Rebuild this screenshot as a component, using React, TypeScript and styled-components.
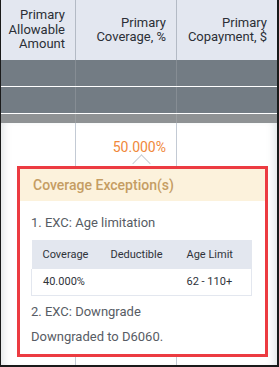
import React from "react";
import styled, { createGlobalStyle } from "styled-components";

const Global = createGlobalStyle`
  html, body { margin: 0; padding: 0; background: #ffffff; }
  * { box-sizing: border-box; }
`;

const Frame = styled.div`
  position: relative;
  width: 279px;
  height: 367px;
  overflow: hidden;
  border-left: 1px solid #1a1a1a;
  border-right: 2px solid #1a1a1a;
  border-bottom: 2px solid #1a1a1a;
  font-family: Roboto, "Liberation Sans", sans-serif;
  background: #ffffff;
`;

const Row = styled.div<{ $h: number; $bg: string; $line: string; $gapBelow?: string }>`
  display: grid;
  grid-template-columns: 75px 101px 1fr;
  height: ${(p) => p.$h}px;
  background: ${(p) => p.$bg};
  border-bottom: ${(p) => (p.$gapBelow ? `1px solid ${p.$gapBelow}` : "none")};
  & > div:not(:last-child) {
    border-right: 1px solid ${(p) => p.$line};
  }
`;

const HeadCell = styled.div`
  display: flex;
  align-items: center;
  justify-content: flex-end;
  text-align: right;
  padding-right: 10px;
  font-size: 13px;
  line-height: 14.5px;
  color: #2b2f36;
`;

const Cell = styled.div<{ $pad?: number }>`
  display: flex;
  justify-content: flex-end;
  align-items: flex-start;
  padding: ${(p) => p.$pad ?? 0}px 10px 0 0;
`;

const Percent = styled.span`
  font-size: 14px;
  line-height: 18px;
  color: #f0883a;
`;

const Body = styled.div`
  height: 243px;
  box-shadow: inset 8px 0 8px -6px rgba(120, 130, 145, 0.25),
    inset -8px 0 8px -6px rgba(120, 130, 145, 0.25);
`;

const Popover = styled.div`
  position: absolute;
  left: 16px;
  top: 166px;
  width: 251px;
  height: 191px;
  background: #ffffff;
  border: 3px solid #ec3b41;
  z-index: 2;
  display: flex;
  flex-direction: column;
`;

const Arrow = styled.div`
  position: absolute;
  left: 134px;
  top: 157px;
  width: 13px;
  height: 13px;
  background: #ffffff;
  border-top: 1px solid #c9ced6;
  border-left: 1px solid #c9ced6;
  transform: rotate(45deg);
  z-index: 1;
`;

const PopHeader = styled.div`
  height: 32px;
  display: flex;
  align-items: center;
  padding-left: 13px;
  background: #fcf2dc;
  color: #c59d63;
  font-size: 14px;
  font-weight: 500;
`;

const PopBody = styled.div`
  padding: 13px 13px 0 11px;
  display: flex;
  flex-direction: column;
`;

const Line = styled.div<{ $mt?: number }>`
  font-size: 13px;
  line-height: 18px;
  color: #575c64;
  margin-top: ${(p) => p.$mt ?? 0}px;
`;

const Table = styled.table`
  width: 220px;
  border-collapse: collapse;
  table-layout: fixed;
  margin-top: 8px;
  font-size: 11px;
  color: #2f333a;
`;

const Th = styled.th<{ $w: number }>`
  width: ${(p) => p.$w}px;
  height: 29px;
  background: #e3e7ef;
  font-weight: 400;
  text-align: left;
  padding: 0 0 0 11px;
`;

const Td = styled.td`
  height: 26px;
  padding: 0 0 0 11px;
  border-bottom: 1px solid #e3e7ef;
  &:first-child { border-left: 1px solid #e3e7ef; }
  &:last-child { border-right: 1px solid #e3e7ef; }
`;

export default function App() {
  return (
    <>
      <Global />
      <Frame>
        <Row $h={60} $bg="#e3e7f0" $line="#b3bac5">
          <HeadCell>Primary<br />Allowable<br />Amount</HeadCell>
          <HeadCell>Primary<br />Coverage, %</HeadCell>
          <HeadCell>Primary<br />Copayment, $</HeadCell>
        </Row>
        <Row $h={27} $bg="#737c84" $line="#868d94" $gapBelow="#ffffff">
          <div /><div /><div />
        </Row>
        <Row $h={27} $bg="#737c84" $line="#868d94" $gapBelow="#ffffff">
          <div /><div /><div />
        </Row>
        <Row $h={9} $bg="#8f9294" $line="#9c9fa1">
          <div /><div /><div />
        </Row>
        <Body>
          <Row $h={243} $bg="transparent" $line="#c3cad4">
            <Cell />
            <Cell $pad={15}><Percent>50.000%</Percent></Cell>
            <Cell />
          </Row>
        </Body>
        <Arrow />
        <Popover>
          <PopHeader>Coverage Exception(s)</PopHeader>
          <PopBody>
            <Line>1. EXC: Age limitation</Line>
            <Table>
              <thead>
                <tr>
                  <Th $w={68}>Coverage</Th>
                  <Th $w={76}>Deductible</Th>
                  <Th $w={76}>Age Limit</Th>
                </tr>
              </thead>
              <tbody>
                <tr>
                  <Td>40.000%</Td>
                  <Td></Td>
                  <Td>62 - 110+</Td>
                </tr>
              </tbody>
            </Table>
            <Line $mt={7}>2. EXC: Downgrade</Line>
            <Line $mt={7}>Downgraded to D6060.</Line>
          </PopBody>
        </Popover>
      </Frame>
    </>
  );
}
